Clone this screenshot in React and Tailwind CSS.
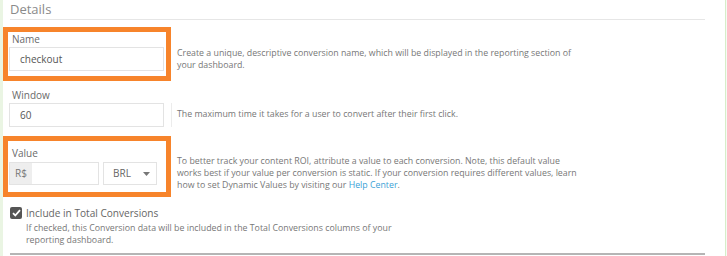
import React from 'react'

const font = { fontFamily: '"Open Sans", "Liberation Sans", sans-serif' }

const App = () => {
    return (
        <div className="flex w-[727px] h-[256px] bg-white overflow-hidden" style={font}>
            <div className="w-[3px] bg-[#eaf5e3]" />
            <div className="w-[722px] flex flex-col pt-[1px]">
                <div className="ml-[7px] w-[695px] border-b border-[#e6e6e6] text-[13px] leading-[17px] text-[#8a8a8a] pb-[1px]">Details</div>

                {/* Name */}
                <div className="flex mt-[7px]">
                    <div className="w-[168px] border-[5px] border-[#f7842b] px-[1px] pt-[1px] pb-[5px]">
                        <div className="pl-[3px] text-[10px] leading-[13px] text-[#6a6a6a]">Name</div>
                        <div className="mt-[1px] h-[24px] w-[155px] border border-[#e3e3e3] pl-[10px] flex items-center text-[10px] text-[#555]">checkout</div>
                    </div>
                    <div className="ml-[6px] mt-[20px] w-[402px] text-[8.8px] leading-[12px] text-[#777]">
                        Create a unique, descriptive conversion name, which will be displayed in the reporting section of your dashboard.
                    </div>
                </div>

                {/* Window */}
                <div className="flex mt-[8px]">
                    <div className="w-[168px] px-[6px]">
                        <div className="pl-[3px] text-[10px] leading-[13px] text-[#6a6a6a]">Window</div>
                        <div className="mt-[1px] h-[24px] w-[155px] border border-[#e3e3e3] pl-[10px] flex items-center text-[10px] text-[#555]">60</div>
                    </div>
                    <div className="mt-[14px] h-[24px] border-l border-[#ececec] pl-[5px] flex items-center text-[8.8px] text-[#777]">
                        The maximum time it takes for a user to convert after their first click.
                    </div>
                </div>

                {/* Value */}
                <div className="flex mt-[9px]">
                    <div className="w-[168px] border-[5px] border-[#f7842b] px-[1px] pt-[6px] pb-[7px]">
                        <div className="pl-[3px] text-[10px] leading-[13px] text-[#6a6a6a]">Value</div>
                        <div className="mt-[2px] flex items-center">
                            <div className="flex h-[23px] w-[90px] border border-[#e3e3e3]">
                                <div className="w-[22px] bg-[#eeeeee] flex items-center justify-center text-[10px] text-[#777]">R$</div>
                                <div className="flex-1" />
                            </div>
                            <div className="ml-[4px] h-[23px] w-[54px] border border-[#e3e3e3] flex items-center pl-[9px] text-[10px] text-[#666]">
                                BRL
                                <svg className="ml-[12px]" width="7" height="4" viewBox="0 0 7 4"><path d="M0 0h7L3.5 4z" fill="#777" /></svg>
                            </div>
                        </div>
                    </div>
                    <p className="ml-[6px] mt-[19px] w-[404px] text-[8.8px] leading-[12px] text-[#777]">
                        To better track your content ROI, attribute a value to each conversion. Note, this default value works best if your value per conversion is static. If your conversion requires different values, learn how to set Dynamic Values by visiting our <a className="inline-block text-[#3b9fd6] leading-[12px]">Help Center</a>.
                    </p>
                </div>

                {/* Include checkbox */}
                <div className="flex ml-[7px] mt-[10px]">
                    <div className="w-[12px] h-[12px] rounded-[2px] bg-[#555] flex items-center justify-center">
                        <svg width="9" height="8" viewBox="0 0 9 8"><path d="M1 4.2l2.3 2.3L8 1.2" stroke="#fff" strokeWidth="1.8" fill="none" /></svg>
                    </div>
                    <div className="ml-[4px]">
                        <div className="text-[10.1px] leading-[12px] text-[#666]">Include in Total Conversions</div>
                        <div className="mt-[3px] w-[370px] text-[8.8px] leading-[12px] text-[#777]">
                            If checked, this Conversion data will be included in the Total Conversions columns of your reporting dashboard.
                        </div>
                    </div>
                </div>

                <div className="ml-[7px] mt-[7px] w-[695px] border-b-2 border-[#b5b5b5]" />
            </div>
            <div className="w-[1px] bg-[#d6edc9]" />
            <div className="flex-1 bg-[#f6fbf3]" />
        </div>
    )
}

export default App
